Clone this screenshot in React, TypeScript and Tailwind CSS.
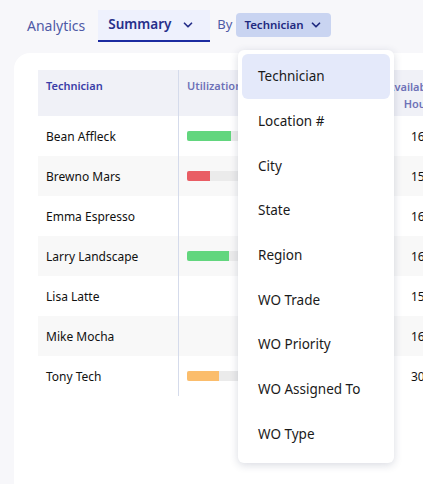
import React from 'react';
import { ChevronDown } from 'lucide-react';

type Row = { name: string; util?: { pct: number; color: string }; hours: string };

const rows: Row[] = [
  { name: 'Bean Affleck', util: { pct: 44, color: 'bg-[#62d67e]' }, hours: '16' },
  { name: 'Brewno Mars', util: { pct: 23, color: 'bg-[#e95d64]' }, hours: '15' },
  { name: 'Emma Espresso', hours: '16' },
  { name: 'Larry Landscape', util: { pct: 42, color: 'bg-[#62d67e]' }, hours: '16' },
  { name: 'Lisa Latte', hours: '15' },
  { name: 'Mike Mocha', hours: '16' },
  { name: 'Tony Tech', util: { pct: 32, color: 'bg-[#fbbd6c]' }, hours: '30' },
];

const groupBy = ['Technician', 'Location #', 'City', 'State', 'Region', 'WO Trade', 'WO Priority', 'WO Assigned To', 'WO Type'];

export default function App() {
  return (
    <div className="relative w-[423px] h-[484px] overflow-hidden bg-[#f7f7fa] font-['Noto_Sans',sans-serif]">
      {/* Top bar */}
      <div className="flex items-center h-[50px] pl-[27px]">
        <span className="text-[14px] text-[#4f5aa6] mr-[13px]">Analytics</span>
        <div className="flex items-center h-[32px] w-[112px] shrink-0 pl-[10px] bg-[#eef1fd] border-b-2 border-[#1c2ba0] mt-[1px]">
          <span className="text-[13.5px] font-semibold text-[#27308a]">Summary</span>
          <ChevronDown size={14} strokeWidth={3} className="shrink-0 ml-auto mr-[15px] text-[#27308a]" />
        </div>
        <span className="text-[13px] text-[#4f5aa6] ml-[7px] mr-[4px]">By</span>
        <div className="flex items-center h-[24px] w-[95px] shrink-0 pl-[8px] rounded-[4px] bg-[#c9d4f1]">
          <span className="text-[11.5px] font-semibold text-[#1f2a80]">Technician</span>
          <ChevronDown size={14} strokeWidth={3} className="shrink-0 ml-auto mr-[8px] text-[#1f2a80]" />
        </div>
      </div>

      {/* Card */}
      <div className="ml-[14px] mt-[3px] w-[600px] h-[460px] bg-white rounded-tl-[16px] pt-[17px] pl-[24px]">
        <div className="flex flex-col w-[480px]">
          <div className="flex h-[46px] bg-[#f0f1f7] text-[11px] font-semibold">
            <div className="w-[141px] shrink-0 border-r border-[#d5dbeb] pl-[8px] pt-[8px] text-[#3b3ea8]">Technician</div>
            <div className="w-[200px] shrink-0 pl-[8px] pt-[8px] text-[#6e72b8]">Utilization</div>
            <div className="w-[57px] shrink-0 pt-[8px] text-[#6e72b8] text-right leading-[17px]">Available<br />Hours</div>
          </div>
          {rows.map((r, i) => (
            <div key={r.name} className={`flex h-[40px] text-[12px] text-[#111] ${i % 2 === 1 ? 'bg-[#f8f8f8]' : 'bg-white'}`}>
              <div className="w-[141px] shrink-0 border-r border-[#d5dbeb] pl-[8px] pt-[2px] flex items-center">{r.name}</div>
              <div className="w-[200px] shrink-0 pl-[8px] flex items-center">
                {r.util && (
                  <div className="w-[100px] h-[10px] bg-[#ebebeb] rounded-[2px] overflow-hidden">
                    <div className={`h-full ${r.util.color}`} style={{ width: `${r.util.pct}%` }} />
                  </div>
                )}
              </div>
              <div className="w-[139px] shrink-0 pl-[32px] pt-[2px] flex items-center">{r.hours}.00</div>
            </div>
          ))}
        </div>
      </div>

      {/* Group-by dropdown */}
      <div className="absolute left-[238px] top-[50px] w-[156px] h-[413px] bg-white rounded-[6px] shadow-[0_2px_8px_rgba(40,50,90,0.18)] p-[4px] flex flex-col">
        {groupBy.map((g, i) => (
          <div
            key={g}
            className={`h-[44.7px] shrink-0 flex items-center pl-[16px] rounded-[6px] text-[13.5px] text-[#1a1a1a] ${i === 0 ? 'bg-[#e4e9fa]' : ''}`}
          >
            {g}
          </div>
        ))}
      </div>
    </div>
  );
}
